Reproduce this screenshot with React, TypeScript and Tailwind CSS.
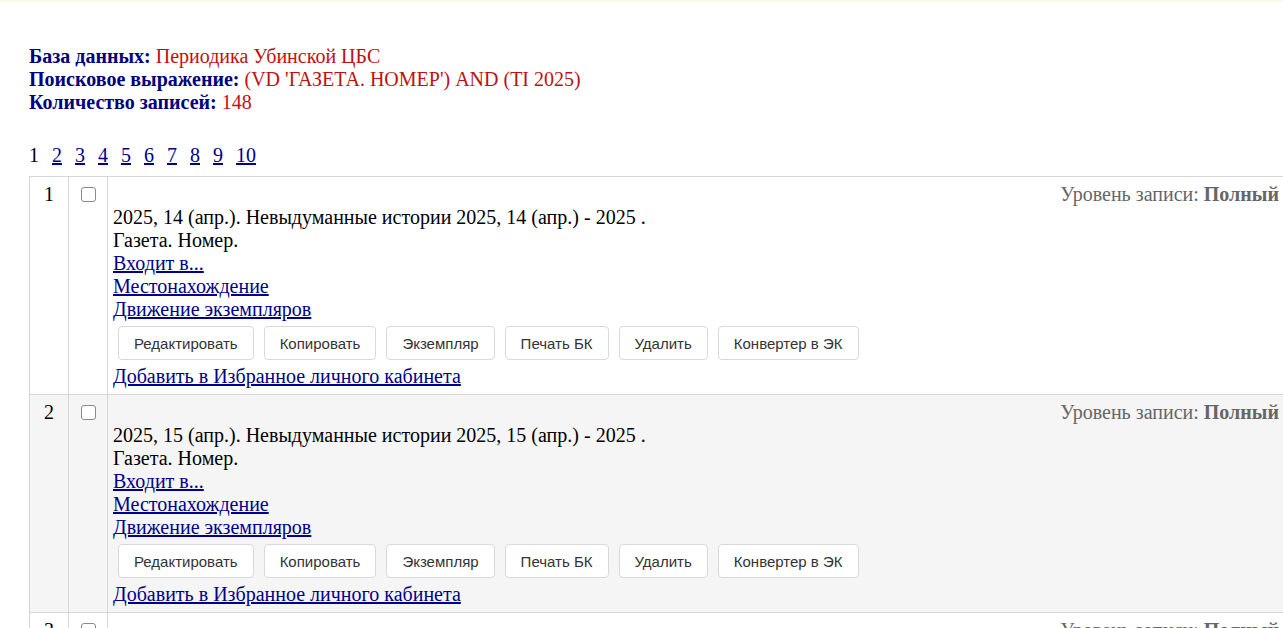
import React from "react";

type Rec = { n: number; issue: string };

const RECORDS: Rec[] = [
  { n: 1, issue: "14" },
  { n: 2, issue: "15" },
  { n: 3, issue: "16" },
];

const BUTTONS = ["Редактировать", "Копировать", "Экземпляр", "Печать БК", "Удалить", "Конвертер в ЭК"];

function Link({ children }: { children: React.ReactNode }) {
  return (
    <div>
      <a href="#" className="text-[#00008b] underline">
        {children}
      </a>
    </div>
  );
}

function Row({ rec, odd }: { rec: Rec; odd: boolean }) {
  return (
    <tr className={odd ? "bg-[#f5f5f5]" : "bg-white"}>
      <td className="w-[39px] border border-[#d6d6d6] text-center align-top pt-[6px]">{rec.n}</td>
      <td className="w-[39px] border border-[#d6d6d6] text-center align-top pt-[6px]">
        <input
          type="checkbox"
          className="appearance-none w-[15px] h-[15px] border border-[#8a8a8a] rounded-[3px] bg-white align-middle -mt-[4px]"
        />
      </td>
      <td className="border border-[#d6d6d6] align-top pl-[5px] pr-[6px] pt-[6px] pb-[6px]">
        <div className="text-right text-[#666]">
          Уровень записи: <b>Полный</b>
        </div>
        <div>
          2025, {rec.issue} (апр.). Невыдуманные истории 2025, {rec.issue} (апр.) - 2025 .
        </div>
        <div>Газета. Номер.</div>
        <Link>Входит в...</Link>
        <Link>Местонахождение</Link>
        <Link>Движение экземпляров</Link>
        <div className="flex">
          {BUTTONS.map((b) => (
            <button
              key={b}
              type="button"
              className="m-[5px] h-[34px] px-[15px] bg-white border border-[#d9d9d9] rounded-[4px] font-['Liberation_Sans',Arial,sans-serif] text-[15px] text-[#333]"
            >
              {b}
            </button>
          ))}
        </div>
        <Link>Добавить в Избранное личного кабинета</Link>
      </td>
    </tr>
  );
}

export default function App() {
  return (
    <div className="h-[628px] w-[1283px] overflow-hidden bg-white font-['Liberation_Serif','Times_New_Roman',serif] text-[20px] leading-[23px] text-black">
      <div className="h-[2px] bg-[#fbf8ea]" />
      <div className="pl-[29px] pt-[43px]">
        <div>
          <b className="text-[#000080]">База данных:</b>{" "}
          <span className="text-[#c01010]">Периодика Убинской ЦБС</span>
        </div>
        <div>
          <b className="text-[#000080]">Поисковое выражение:</b>{" "}
          <span className="text-[#c01010]">(VD 'ГАЗЕТА. НОМЕР') AND (TI 2025)</span>
        </div>
        <div>
          <b className="text-[#000080]">Количество записей:</b>{" "}
          <span className="text-[#c01010]">148</span>
        </div>

        <div className="flex gap-[13px] mt-[30px] mb-[9px]">
          <span>1</span>
          {[2, 3, 4, 5, 6, 7, 8, 9, 10].map((p) => (
            <a key={p} href="#" className="text-[#00008b] underline">
              {p}
            </a>
          ))}
        </div>

        <table className="border-collapse w-[1257px]">
          <tbody>
            {RECORDS.map((r, i) => (
              <Row key={r.n} rec={r} odd={i % 2 === 1} />
            ))}
          </tbody>
        </table>
      </div>
    </div>
  );
}
